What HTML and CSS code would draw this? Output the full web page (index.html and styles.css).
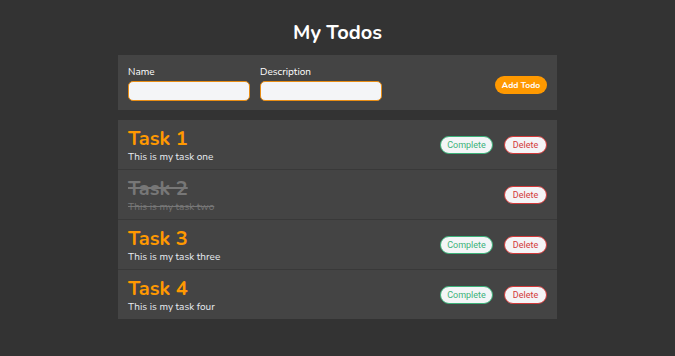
FILE: index.html
```html
<!DOCTYPE html>
<html>
<head>
<meta charset="utf-8">
<link rel="stylesheet" href="styles.css">
</head>
<body>
<div class="app">
  <h1 class="title">My Todos</h1>
  <form class="form-panel">
    <div class="field">
      <label class="label">Name</label>
      <input class="input" type="text">
    </div>
    <div class="field">
      <label class="label">Description</label>
      <input class="input" type="text">
    </div>
    <button class="btn-add" type="button">Add Todo</button>
  </form>
  <ul class="list">
    <li class="row">
      <div class="info"><div class="task-name">Task 1</div><div class="task-desc">This is my task one</div></div>
      <div class="actions"><button class="btn btn-complete">Complete</button><button class="btn btn-delete">Delete</button></div>
    </li>
    <li class="row done">
      <div class="info"><div class="task-name">Task 2</div><div class="task-desc">This is my task two</div></div>
      <div class="actions"><button class="btn btn-delete">Delete</button></div>
    </li>
    <li class="row">
      <div class="info"><div class="task-name">Task 3</div><div class="task-desc">This is my task three</div></div>
      <div class="actions"><button class="btn btn-complete">Complete</button><button class="btn btn-delete">Delete</button></div>
    </li>
    <li class="row">
      <div class="info"><div class="task-name">Task 4</div><div class="task-desc">This is my task four</div></div>
      <div class="actions"><button class="btn btn-complete">Complete</button><button class="btn btn-delete">Delete</button></div>
    </li>
  </ul>
</div>
</body>
</html>
```
FILE: styles.css
```css
* { box-sizing: border-box; }
body {
  margin: 0;
  background: #333333;
  font-family: "Nunito", "Lato", "Open Sans", sans-serif;
  color: #ffffff;
}
.app {
  width: 439px;
  margin: 0 auto;
}
.title {
  margin: 21px 0 10px;
  font-size: 20px;
  line-height: 24px;
  font-weight: 700;
  text-align: center;
  color: #ffffff;
}
.form-panel {
  display: flex;
  align-items: center;
  background: #444444;
  padding: 10px 10px 9px;
  margin: 0;
}
.field {
  display: flex;
  flex-direction: column;
  margin-right: 10px;
}
.label {
  font-size: 10px;
  line-height: 14px;
  color: #ffffff;
}
.input {
  margin-top: 2px;
  width: 122px;
  height: 20px;
  background: #f4f5f7;
  border: 1px solid #e88d14;
  border-radius: 5px;
  padding: 0 6px;
}
.btn-add {
  margin-left: auto;
  margin-top: 3px;
  width: 52px;
  height: 18px;
  border: none;
  border-radius: 9px;
  background: #ff9900;
  color: #ffffff;
  font-family: "Nunito", "Lato", sans-serif;
  font-size: 8.5px;
  font-weight: 700;
  padding: 0;
}
.list {
  list-style: none;
  margin: 10px 0 0;
  padding: 0;
  background: #444444;
}
.row {
  display: flex;
  align-items: center;
  padding: 7px 10px 6px;
  border-bottom: 1px solid #393939;
}
.row:last-child { border-bottom: none; }
.info { flex: 1; }
.task-name {
  font-size: 20px;
  line-height: 24px;
  font-weight: 700;
  color: #ff9900;
}
.task-desc {
  font-size: 10px;
  line-height: 12px;
  color: #e8ecf2;
}
.done .task-name,
.done .task-desc {
  color: #777777;
  text-decoration: line-through;
}
.actions {
  display: flex;
  gap: 11px;
}
.btn {
  height: 18px;
  border-radius: 9px;
  background: #f4f5f7;
  font-family: "Roboto", "Liberation Sans", sans-serif;
  font-size: 9px;
  padding: 0;
}
.btn-complete {
  width: 53px;
  border: 1px solid #3cb37a;
  color: #3cb37a;
}
.btn-delete {
  width: 43px;
  border: 1px solid #d33a3a;
  color: #d33a3a;
}
```
